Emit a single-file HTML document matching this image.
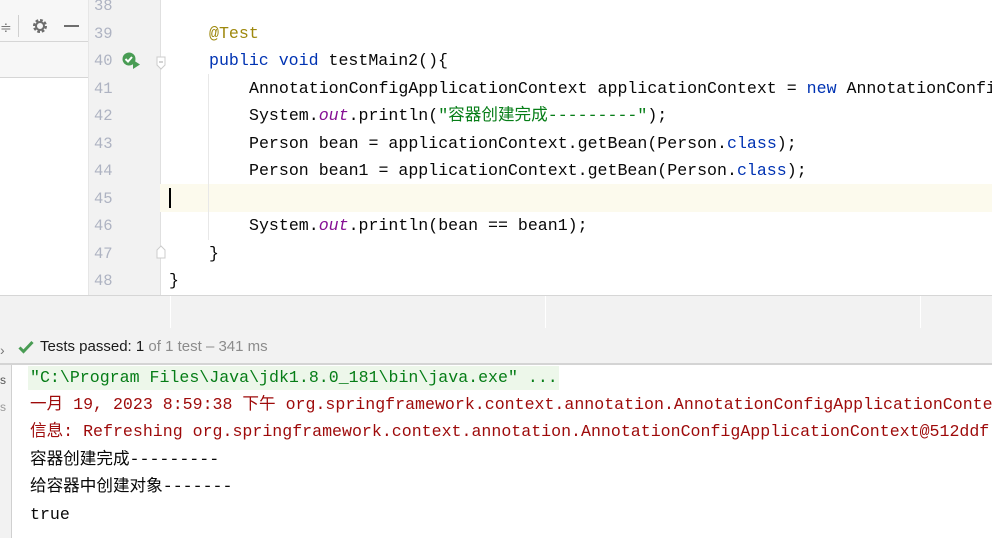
<!DOCTYPE html>
<html><head><meta charset="utf-8"><style>
*{margin:0;padding:0;box-sizing:border-box}
body{width:992px;height:538px;overflow:hidden;background:#fff;position:relative;font-family:"Liberation Mono","Noto Sans CJK SC",monospace;font-size:16.6px;line-height:22px;color:#080808}
.a{position:absolute;white-space:pre}
.ln{position:absolute;left:88px;width:44px;text-align:left;padding-left:6px;color:#aeb3c2;font-size:15.5px;line-height:22px}
.k{color:#0033b3}.an{color:#9e880d}.s{color:#067d17}.o{color:#871094;font-style:italic}
.c{position:absolute;left:30px;white-space:pre;line-height:22px}
.r{color:#9e0a0a}
</style></head><body>
<div class="a" style="left:0;top:0;width:88px;height:42px;background:#f7f7f7;border-bottom:1px solid #d6d6d6"></div>
<div class="a" style="left:0;top:42px;width:88px;height:36px;background:#f7f7f7;border-bottom:1px solid #d6d6d6"></div>
<div class="a" style="left:18px;top:15px;width:1px;height:22px;background:#d0d0d0"></div>
<div class="a" style="left:0;top:16px;font-family:'Liberation Sans';color:#777;font-size:14px">≑</div>
<svg class="a" style="left:31px;top:17px" width="18" height="18" viewBox="0 0 18 18"><circle cx="9" cy="9" r="5.5" fill="none" stroke="#6e6e6e" stroke-width="3" stroke-dasharray="2.6 1.7"/><circle cx="9" cy="9" r="4" fill="none" stroke="#6e6e6e" stroke-width="2"/></svg>
<div class="a" style="left:64px;top:25px;width:15px;height:2px;background:#6e6e6e"></div>
<div class="a" style="left:88px;top:0;width:73px;height:295px;background:#f2f2f2;border-right:1px solid #e0e0e0;border-left:1px solid #e6e6e6"></div>
<div class="a" style="left:160px;top:184px;width:832px;height:28px;background:#fcfaed"></div>
<div class="a" style="left:169px;top:188px;width:2px;height:20px;background:#000"></div>
<div class="a" style="left:208px;top:74px;width:1px;height:166px;background:#e8e8e8"></div>
<div class="ln" style="top:-5px">38</div>
<div class="ln" style="top:23px">39</div>
<div class="ln" style="top:50px">40</div>
<div class="ln" style="top:78px">41</div>
<div class="ln" style="top:105px">42</div>
<div class="ln" style="top:133px">43</div>
<div class="ln" style="top:160px">44</div>
<div class="ln" style="top:188px">45</div>
<div class="ln" style="top:215px">46</div>
<div class="ln" style="top:243px">47</div>
<div class="ln" style="top:270px">48</div>
<svg class="a" style="left:122px;top:52px" width="20" height="18" viewBox="0 0 20 18"><circle cx="7" cy="7" r="6.5" fill="#499c54"/><path d="M3.5 7l2.5 2.5 4-4.5" stroke="#fff" stroke-width="2" fill="none"/><path d="M11 8l7 4.5-7 4.5z" fill="#499c54"/></svg>
<svg class="a" style="left:156px;top:56px" width="10" height="14"><path d="M1 1h8v8l-4 4-4-4z" fill="#fff" stroke="#ccc"/><path d="M3 6h4" stroke="#aaa"/></svg>
<svg class="a" style="left:156px;top:245px" width="10" height="14"><path d="M1 13h8V5L5 1 1 5z" fill="#fff" stroke="#ccc"/></svg>
<div class="a" style="left:209px;top:23px"><span class="an">@Test</span></div>
<div class="a" style="left:209px;top:50px"><span class="k">public void</span> testMain2(){</div>
<div class="a" style="left:249px;top:78px">AnnotationConfigApplicationContext applicationContext = <span class="k">new</span> AnnotationConfi</div>
<div class="a" style="left:249px;top:105px">System.<span class="o">out</span>.println(<span class="s">"容器创建完成---------"</span>);</div>
<div class="a" style="left:249px;top:133px">Person bean = applicationContext.getBean(Person.<span class="k">class</span>);</div>
<div class="a" style="left:249px;top:160px">Person bean1 = applicationContext.getBean(Person.<span class="k">class</span>);</div>
<div class="a" style="left:249px;top:215px">System.<span class="o">out</span>.println(bean == bean1);</div>
<div class="a" style="left:209px;top:243px">}</div>
<div class="a" style="left:169px;top:270px">}</div>
<div class="a" style="left:0;top:295px;width:992px;height:70px;background:#f2f2f2;border-top:1px solid #d6d6d6;border-bottom:2px solid #d4d4d4"></div>
<div class="a" style="left:170px;top:296px;width:1px;height:32px;background:#fff"></div>
<div class="a" style="left:545px;top:296px;width:1px;height:32px;background:#fff"></div>
<div class="a" style="left:920px;top:296px;width:1px;height:32px;background:#fff"></div>
<div class="a" style="left:0;top:339px;font-family:'Liberation Sans';font-size:14px;color:#777">›</div>
<svg class="a" style="left:18px;top:340px" width="16" height="14"><path d="M1.5 7.5l4 4 9-9.5" stroke="#499c54" stroke-width="3" fill="none"/></svg>
<div class="a" style="left:40px;top:337px;font-family:'Liberation Sans','Noto Sans CJK SC',sans-serif;font-size:15px;line-height:20px;color:#1a1a1a">Tests passed: 1 <span style="color:#8c8c8c">of 1 test – 341 ms</span></div>
<div class="a" style="left:0;top:365px;width:12px;height:173px;background:#f2f2f2;border-right:1px solid #d0d0d0"></div>
<div class="a" style="left:0;top:369px;font-size:12px;color:#555;font-family:'Liberation Sans'">s</div>
<div class="a" style="left:0;top:396px;font-size:12px;color:#999;font-family:'Liberation Sans'">s</div>
<div class="a" style="left:28px;top:366px;width:531px;height:24px;background:#edf7ea"></div>
<div class="c s" style="top:367px">"C:\Program Files\Java\jdk1.8.0_181\bin\java.exe" ...</div>
<div class="c r" style="top:394px">一月 19, 2023 8:59:38 下午 org.springframework.context.annotation.AnnotationConfigApplicationConte</div>
<div class="c r" style="top:421px">信息: Refreshing org.springframework.context.annotation.AnnotationConfigApplicationContext@512ddf</div>
<div class="c" style="top:449px">容器创建完成---------</div>
<div class="c" style="top:476px">给容器中创建对象-------</div>
<div class="c" style="top:504px">true</div>
</body></html>
